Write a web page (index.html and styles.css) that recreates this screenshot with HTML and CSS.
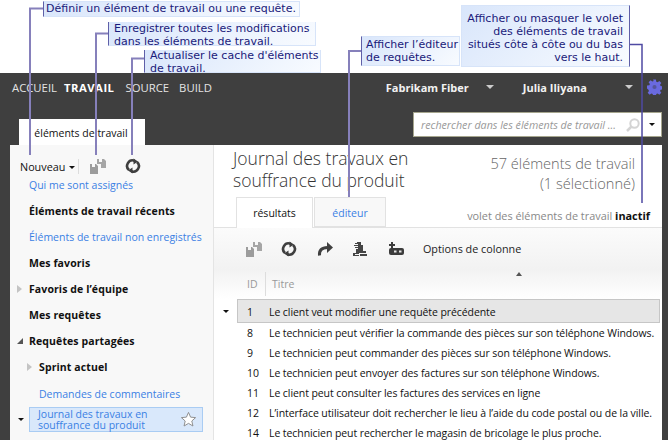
FILE: index.html
```html
<!DOCTYPE html>
<html lang="fr">
<head>
  <meta charset="UTF-8">
  <meta name="viewport" content="width=device-width, initial-scale=1.0">
  <title>Éléments de travail</title>
  <link rel="stylesheet" href="styles.css">
</head>
<body>
  <svg width="0" height="0" class="defs">
    <symbol id="i-save" viewBox="0 0 16 16">
      <path d="M7 1h2v3h3V1h2l2 2v7h-5V6H7z" fill="#a6a6a6"/>
      <path d="M0 6h2v3h3V6h1l2 2v8H0z" fill="#9c9c9c"/>
    </symbol>
    <symbol id="i-refresh" viewBox="0 0 16 16">
      <path d="M4 12A5.500 5.500 0 0 1 9.500 2.700" fill="none" stroke="#3f3f3f" stroke-width="2.600"/>
      <path d="M12 4A5.500 5.500 0 0 1 6.500 13.300" fill="none" stroke="#3f3f3f" stroke-width="2.600"/>
      <path d="M8.500.5L13 3.500 8.500 6.500z" fill="#3f3f3f"/>
      <path d="M7.500 15.500L3 12.500l4.500-3z" fill="#3f3f3f"/>
    </symbol>
    <symbol id="i-redo" viewBox="0 0 16 16">
      <path d="M2.500 14.500c-.5-5 2-8 8-8" fill="none" stroke="#3f3f3f" stroke-width="3"/>
      <path d="M10 1l6 5.500-6 5.500z" fill="#3f3f3f"/>
    </symbol>
    <symbol id="i-query" viewBox="0 0 16 16">
      <path d="M5 1h4v3h2v6h3v2H4V8h2V7H3V6h3V5H2V4h4V3H3V2h2z" fill="#454545"/>
      <path d="M1 12h6v1H3v1h4v1H1zM8 13h7v2H8z" fill="#454545"/>
    </symbol>
    <symbol id="i-addcol" viewBox="0 0 16 16">
      <path d="M3 1h2v2h2v2H5v2H3V5H1V3h2z" fill="#3c3c3c"/>
      <path d="M3 7h11a2 2 0 0 1 2 2v3a2 2 0 0 1-2 2H3a2 2 0 0 1-2-2V9a2 2 0 0 1 2-2z" fill="#3c3c3c"/>
      <path d="M6 9.500h2.500v2H6zM11 9.500h2.500v2H11z" fill="#e4e4e4"/>
    </symbol>
  </svg>

  <header class="notes">
    <div class="note note-new">Définir un élément de travail ou une requête.</div>
    <div class="note note-save">Enregistrer toutes les modifications<br>dans les éléments de travail.</div>
    <div class="note note-refresh">Actualiser le cache d'éléments<br>de travail.</div>
    <div class="note note-editor">Afficher l’éditeur<br>de requêtes.</div>
    <div class="note note-pane">Afficher ou masquer le volet<br>des éléments de travail<br>situés côte à côte ou du bas<br>vers le haut.</div>
  </header>

  <div class="app">
    <nav class="topbar">
      <ul class="menu">
        <li>ACCUEIL</li>
        <li class="current">TRAVAIL</li>
        <li>SOURCE</li>
        <li>BUILD</li>
      </ul>
      <div class="account">
        <span class="acct-team">Fabrikam Fiber</span><span class="caret-light"></span>
        <span class="acct-user">Julia Iliyana</span><span class="caret-light"></span>
      </div>
      <svg class="gear" width="15" height="16" viewBox="0 0 16 16">
        <path d="M6.500 0h3l.4 2.300 1.400.6 1.900-1.400 2.100 2.100-1.400 1.900.6 1.400 2.500.6v3l-2.500.4-.6 1.400 1.400 1.900-2.100 2.100-1.900-1.400-1.400.6-.4 2.500h-3l-.4-2.500-1.400-.6-1.900 1.400-2.100-2.100 1.400-1.900-.6-1.400L0 9.500v-3l2.500-.4.6-1.400-1.400-1.900 2.100-2.100 1.900 1.400 1.400-.6z" fill="#6a6adf"/>
        <circle cx="8" cy="8" r="2.200" fill="#55559a"/>
      </svg>
    </nav>

    <div class="tabbar">
      <div class="hub-tab">éléments de travail</div>
      <div class="search">
        <span class="search-box">
          <span class="search-text">rechercher dans les éléments de travail ...</span>
          <svg width="14" height="14" viewBox="0 0 14 14"><circle cx="8.500" cy="5.500" r="4.200" fill="none" stroke="#d4d4d4" stroke-width="2"/><path d="M5.500 8.500L1 13" stroke="#d4d4d4" stroke-width="2.500"/></svg>
        </span>
        <span class="search-drop"><span class="caret-dark"></span></span>
      </div>
    </div>

    <div class="panes">
      <aside class="side">
        <div class="side-tools">
          <span class="new-btn">Nouveau <span class="caret-dark"></span></span>
          <span class="tool-sep"></span>
          <svg class="ico"><use href="#i-save"/></svg>
          <svg class="ico ico-refresh"><use href="#i-refresh"/></svg>
        </div>
        <a class="item link">Qui me sont assignés</a>
        <div class="item head">Éléments de travail récents</div>
        <a class="item link">Éléments de travail non enregistrés</a>
        <div class="item head">Mes favoris</div>
        <div class="item head"><span class="tri-open"></span>Favoris de l’équipe</div>
        <div class="item head">Mes requêtes</div>
        <div class="item head"><span class="tri-down"></span>Requêtes partagées</div>
        <div class="item head sub"><span class="tri-open"></span>Sprint actuel</div>
        <a class="item link sub comments">Demandes de commentaires</a>
        <div class="selected-row">
          <span class="caret-dark"></span>
          <div class="selected">
            <span>Journal des travaux en<br>souffrance du produit</span>
            <svg width="17" height="17" viewBox="0 0 18 18"><path d="M9 1.500l2.200 5 5.300.5-4 3.600 1.200 5.300L9 13.100l-4.700 2.800 1.200-5.300-4-3.600 5.300-.5z" fill="#fff" stroke="#8a8a8a"/></svg>
          </div>
        </div>
      </aside>

      <main class="content">
        <div class="title-row">
          <h1>Journal des travaux en<br>souffrance du produit</h1>
          <div class="count">57 éléments de travail<br>(1 sélectionné)</div>
        </div>
        <div class="tabs-row">
          <div class="tabs">
            <span class="tab on">résultats</span>
            <span class="tab off">éditeur</span>
          </div>
          <div class="pane-state">volet des éléments de travail <b>inactif</b></div>
        </div>
        <div class="toolbar">
          <svg class="ico"><use href="#i-save"/></svg>
          <svg class="ico"><use href="#i-refresh"/></svg>
          <svg class="ico"><use href="#i-redo"/></svg>
          <svg class="ico"><use href="#i-query"/></svg>
          <svg class="ico"><use href="#i-addcol"/></svg>
          <span class="col-options">Options de colonne</span>
        </div>
        <div class="col-head">
          <span class="col-id">ID</span>
          <span class="col-title">Titre</span>
          <span class="sort-mark"></span>
        </div>
        <div class="rows">
          <div class="row row-on"><span class="caret-dark row-caret"></span><span class="cell-id">1</span><span>Le client veut modifier une requête précédente</span></div>
          <div class="row"><span class="cell-id">8</span><span>Le technicien peut vérifier la commande des pièces sur son téléphone Windows.</span></div>
          <div class="row"><span class="cell-id">9</span><span>Le technicien peut commander des pièces sur son téléphone Windows.</span></div>
          <div class="row"><span class="cell-id">10</span><span>Le technicien peut envoyer des factures sur son téléphone Windows.</span></div>
          <div class="row"><span class="cell-id">11</span><span>Le client peut consulter les factures des services en ligne</span></div>
          <div class="row"><span class="cell-id">12</span><span>L’interface utilisateur doit rechercher le lieu à l’aide du code postal ou de la ville.</span></div>
          <div class="row"><span class="cell-id">14</span><span>Le technicien peut rechercher le magasin de bricolage le plus proche.</span></div>
        </div>
      </main>
    </div>
  </div>

  <!-- leader lines over the shot -->
  <svg class="lines" width="668" height="447">
    <path class="ln" d="M43 8.500H30V155"/>
    <path class="ln" d="M108 33.500H96V155"/>
    <path class="ln" d="M144 58.500H132V155"/>
    <path class="ln" d="M361 51H349V203"/>
    <path class="ln ln-dark" d="M630 44.500H642V203"/>
  </svg>
</body>
</html>
```

FILE: styles.css
```css
* { margin: 0; padding: 0; box-sizing: border-box; }
html, body { width: 668px; height: 447px; overflow: hidden; }
body { position: relative; background: #fff; font-family: "Open Sans", "Noto Sans", sans-serif; font-size: 10.500px; color: #111; }
.defs { position: absolute; }

/* callouts above the app */
.notes { height: 73px; position: relative; }
.note {
  position: absolute;
  font-family: "DejaVu Sans", sans-serif;
  font-size: 11px;
  line-height: 13px;
  color: #1a1a7a;
  background: linear-gradient(135deg, #d9e6fb, #f8fbff);
  border: 1px solid #d7e4f9;
  border-left: 1px solid #5f5fa8;
  white-space: nowrap;
}
.note-new { left: 43px; top: 1px; width: 257px; height: 16px; padding: 0 2px; }
.note-save { left: 108px; top: 22px; width: 208px; height: 24px; padding: 0 5px; border-top: 0; }
.note-refresh { left: 144px; top: 50px; width: 177px; height: 23px; padding: 0 5px; border-top: 0; line-height: 12.500px; }
.note-editor { left: 361px; top: 36px; width: 99px; height: 30px; padding: 1px 4px; }
.note-pane {
  left: 461px; top: 5px; width: 169px; height: 62px;
  padding: 6px 6px 0 5px;
  text-align: right;
  border-left: 1px solid #d7e4f9;
  border-right: 1px solid #5f5fa8;
}

.app { height: 367px; background: #3f3f3f; }

.topbar { height: 28px; display: flex; align-items: center; color: #fff; }
.menu { list-style: none; display: flex; gap: 10px; padding-left: 12px; font-size: 11.300px; color: #e4e4e4; }
.menu .current { font-weight: 700; color: #fff; margin: 0 1px 0 -3px; letter-spacing: 0.5px; }
.account { margin-left: auto; display: flex; align-items: center; font-weight: 700; font-size: 11px; color: #f2f2f2; }
.acct-team { margin-right: 17px; }
.acct-user { margin: 0 38px 0 29px; }
.caret-light { width: 0; height: 0; border: 4px solid transparent; border-top: 4px solid #ccc; border-bottom: 0; display: inline-block; }
.caret-dark { width: 0; height: 0; border: 3.500px solid transparent; border-top: 3.500px solid #111; border-bottom: 0; display: inline-block; vertical-align: middle; }
.gear { margin: 0 6px 0 14px; flex: none; }

.tabbar { height: 44px; display: flex; align-items: flex-end; justify-content: space-between; padding-left: 19px; }
.hub-tab { width: 126px; height: 26px; background: #fff; text-align: center; line-height: 28px; padding-right: 2px; }
.search { display: flex; height: 25px; width: 249px; margin: 0 6px 8px 0; background: #fff; border: 1px solid #a6a68e; }
.search-box { flex: 1; display: flex; align-items: center; justify-content: space-between; padding: 0 2px 0 7px; }
.search-text { font-style: italic; color: #999; font-size: 10.700px; white-space: nowrap; }
.search-drop { width: 19px; border-left: 1px solid #eee; display: flex; align-items: center; justify-content: center; }

.panes { height: 295px; display: flex; margin-left: 10px; }
.side { width: 204px; flex: none; background: #f8f8f8; border-right: 1px solid #e4e4e4; }
.side-tools { height: 27px; padding-top: 15px; display: flex; align-items: center; padding-left: 10px; }
.new-btn { font-size: 10.800px; width: 58px; white-space: nowrap; }
.new-btn .caret-dark { margin-left: 1px; }
.tool-sep { width: 1px; height: 15px; background: #ddd; margin-right: 11px; }
.ico { width: 16px; height: 16px; flex: none; }
.ico-refresh { margin-left: 19px; }

.item { display: block; height: 26px; line-height: 26px; padding-left: 19px; position: relative; white-space: nowrap; }
.head { font-weight: 700; color: #111; letter-spacing: 0.1px; }
.link { color: #3a80e4; }
.sub { padding-left: 29px; }
.comments { height: 27px; line-height: 28px; }
.tri-open { position: absolute; left: 7px; top: 9px; border-left: 5px solid #c4c4c4; border-top: 4px solid transparent; border-bottom: 4px solid transparent; }
.sub .tri-open { left: 17px; }
.tri-down { position: absolute; left: 7px; top: 10px; border-bottom: 6px solid #555; border-left: 6px solid transparent; }
.selected-row { display: flex; align-items: center; height: 25px; }
.selected-row .caret-dark { margin-left: 8px; }
.selected { width: 174px; height: 25px; margin-left: 5px; background: #d9e8fb; border: 1px solid #a9ccf3; color: #3a80e4; line-height: 11px; padding: 0 5px 0 8px; display: flex; justify-content: space-between; align-items: center; white-space: nowrap; }

.content { flex: 1; background: #fff; margin-right: 6px; min-width: 0; }
.title-row { height: 52px; display: flex; justify-content: space-between; padding: 2px 27px 0 19px; }
h1 { font-weight: 300; font-size: 17.500px; line-height: 22px; color: #333; }
.count { font-weight: 300; font-size: 14.600px; line-height: 20px; color: #666; text-align: right; padding-top: 6px; }
.tabs-row { height: 30px; display: flex; justify-content: space-between; padding-left: 22px; }
.tabs { display: flex; gap: 1px; }
.tab { display: block; height: 31px; text-align: center; line-height: 30px; border: 1px solid #e2e2e2; position: relative; z-index: 1; }
.tab.on { width: 77px; background: #fff; border-bottom: 0; }
.tab.off { width: 72px; height: 30px; background: #f8f8f8; color: #3a80e4; }
.pane-state { font-size: 10.900px; line-height: 16px; color: #888; padding: 11px 12px 0 0; white-space: nowrap; }
.pane-state b { color: #111; }

.toolbar { height: 42px; display: flex; align-items: center; gap: 19.400px; padding-left: 32px; background: linear-gradient(#fbfbfb, #f2f2f2); border-top: 1px solid #e2e2e2; }
.col-options { color: #222; font-size: 10.800px; }
.col-head { height: 30px; display: flex; align-items: center; color: #999; position: relative; background: linear-gradient(#f2f2f2, #fff); }
.col-id { margin-left: 33px; width: 19px; border-right: 1px solid #ddd; height: 24px; line-height: 24px; }
.col-title { margin-left: 6px; }
.sort-mark { position: absolute; left: 302px; top: 3px; border-bottom: 4px solid #555; border-left: 3px solid transparent; border-right: 3px solid transparent; }

.row { height: 20px; display: flex; align-items: center; padding-left: 33px; letter-spacing: -0.08px; white-space: nowrap; position: relative; }
.cell-id { width: 22px; flex: none; }
.row-on { height: 24px; margin-left: 23px; padding: 1px 0 0 9px; background: #e6e6e6; border: 1px solid #c6c6c6; width: 423px; }
.row-caret { position: absolute; left: -15px; top: 10px; }

.lines { position: absolute; left: 0; top: 0; pointer-events: none; }
.ln { fill: none; stroke: #8680bb; stroke-width: 2; }
.ln-dark { stroke: #4f4aa3; stroke-width: 1.500; }
```
